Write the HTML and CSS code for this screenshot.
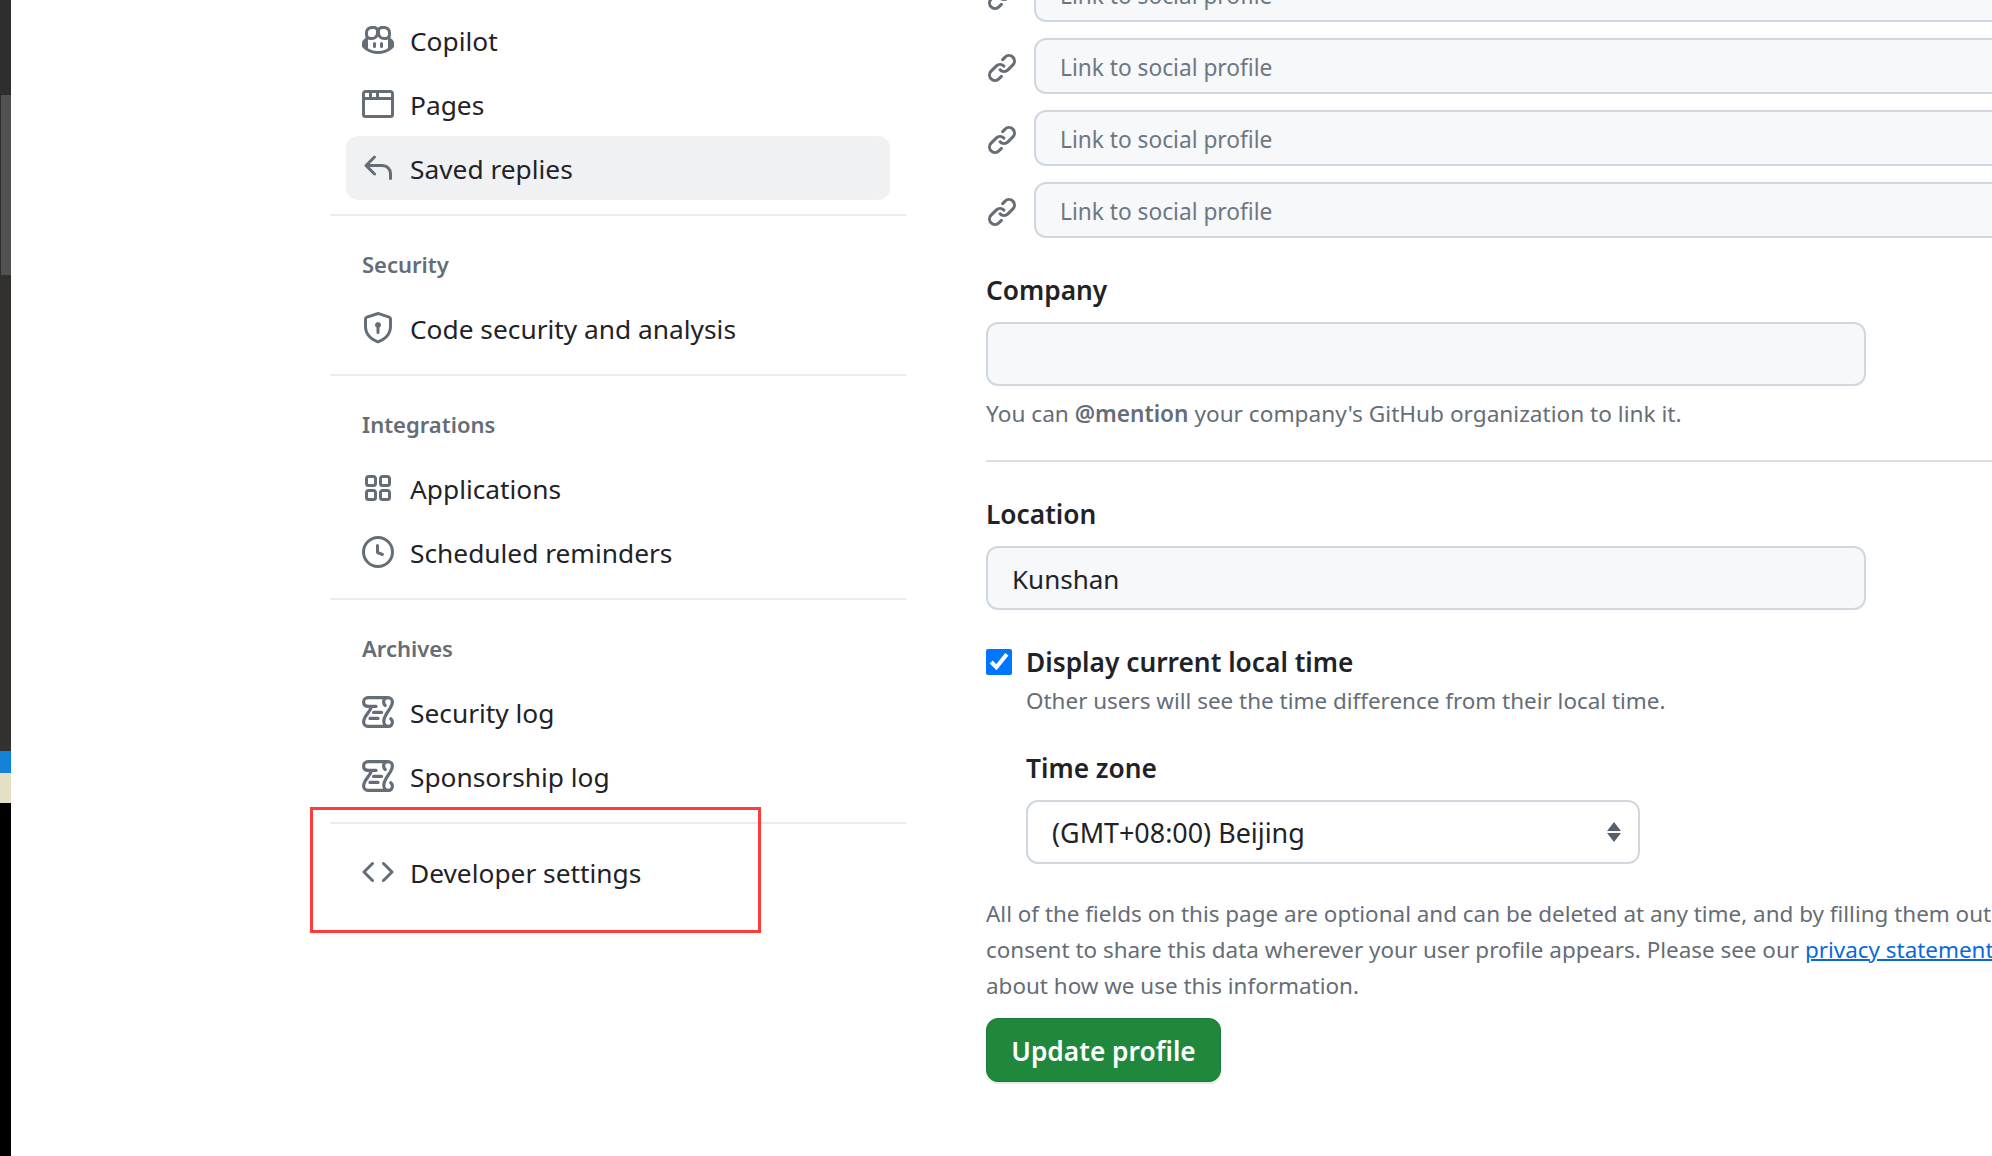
FILE: index.html
```html
<!DOCTYPE html>
<html lang="en">
<head>
    <meta charset="UTF-8">
    <meta name="viewport" content="width=device-width, initial-scale=1.0">
    <title>Public profile</title>
    <link rel="stylesheet" href="styles.css">
</head>

<body>
    <div class="strip">
        <div class="strip-top"></div>
        <div class="strip-thumb"></div>
        <div class="strip-dark"></div>
        <div class="strip-blue"></div>
        <div class="strip-cream"></div>
        <div class="strip-black"></div>
    </div>

    <nav class="sidebar">
        <a class="nav-item">
            <svg class="icon" viewBox="0 0 16 16"><path d="M7.998 15.035c-4.562 0-7.873-2.914-7.998-3.749V9.338c.085-.628.677-1.686 1.588-2.065.013-.07.024-.143.036-.218.029-.183.06-.384.126-.612-.201-.508-.254-1.084-.254-1.656 0-.87.128-1.769.693-2.484.579-.733 1.494-1.124 2.724-1.261 1.206-.134 2.262.034 2.944.765.05.053.096.108.139.165.044-.057.094-.112.143-.165.682-.731 1.738-.899 2.944-.765 1.23.137 2.145.528 2.724 1.261.566.715.693 1.614.693 2.484 0 .572-.053 1.148-.254 1.656.066.228.098.429.126.612.012.076.024.148.037.218.924.385 1.522 1.471 1.591 2.095v1.872c0 .766-3.351 3.795-8.002 3.795Zm0-1.485c2.28 0 4.584-1.11 5.002-1.433V7.862l-.023-.116c-.49.21-1.075.291-1.727.291-1.146 0-2.059-.327-2.71-.991A3.222 3.222 0 0 1 8 6.303a3.24 3.24 0 0 1-.544.743c-.65.664-1.563.991-2.71.991-.652 0-1.236-.081-1.727-.291l-.023.116v4.255c.419.323 2.722 1.433 5.002 1.433ZM6.762 2.83c-.193-.206-.637-.413-1.682-.297-1.019.113-1.479.404-1.713.7-.247.312-.369.789-.369 1.554 0 .793.129 1.171.308 1.371.162.181.519.379 1.442.379.853 0 1.339-.235 1.638-.54.315-.322.527-.827.617-1.553.117-.935-.037-1.395-.241-1.614Zm4.155-.297c-1.044-.116-1.488.091-1.681.297-.204.219-.359.679-.242 1.614.091.726.303 1.231.618 1.553.299.305.784.54 1.638.54.922 0 1.28-.198 1.442-.379.179-.2.308-.578.308-1.371 0-.765-.123-1.242-.37-1.554-.233-.296-.693-.587-1.713-.7Z"/><path d="M6.25 9.037a.75.75 0 0 1 .75.75v1.501a.75.75 0 0 1-1.5 0V9.787a.75.75 0 0 1 .75-.75Zm4.25.75v1.501a.75.75 0 0 1-1.5 0V9.787a.75.75 0 0 1 1.5 0Z"/></svg>
            Copilot
        </a>
        <a class="nav-item">
            <svg class="icon" viewBox="0 0 16 16"><path d="M0 2.75C0 1.784.784 1 1.75 1h12.5c.966 0 1.75.784 1.75 1.75v10.5A1.75 1.75 0 0 1 14.25 15H1.75A1.75 1.75 0 0 1 0 13.25ZM14.5 6h-13v7.25c0 .138.112.25.25.25h12.5a.25.25 0 0 0 .25-.25Zm-6-3.5v2h6v-1.75a.25.25 0 0 0-.25-.25ZM5 2.5v2h2v-2Zm-3.25 0a.25.25 0 0 0-.25.25V4.5h2v-2Z"/></svg>
            Pages
        </a>
        <a class="nav-item active">
            <svg class="icon" viewBox="0 0 16 16"><path d="M6.78 1.97a.75.75 0 0 1 0 1.06L3.81 6h6.44A4.75 4.75 0 0 1 15 10.75v2.5a.75.75 0 0 1-1.5 0v-2.5a3.25 3.25 0 0 0-3.25-3.25H3.81l2.97 2.97a.749.749 0 0 1-.326 1.275.749.749 0 0 1-.734-.215L1.47 7.28a.75.75 0 0 1 0-1.06l4.25-4.25a.75.75 0 0 1 1.06 0Z"/></svg>
            Saved replies
        </a>
        <hr class="nav-divider">

        <h3 class="nav-heading">Security</h3>
        <a class="nav-item">
            <svg class="icon" viewBox="0 0 16 16"><path d="m8.533.133 5.25 1.68A1.75 1.75 0 0 1 15 3.48V7c0 1.566-.32 3.182-1.303 4.682-.983 1.498-2.585 2.813-5.032 3.855a1.697 1.697 0 0 1-1.33 0c-2.447-1.042-4.049-2.357-5.032-3.855C1.32 10.182 1 8.566 1 7V3.48a1.75 1.75 0 0 1 1.217-1.667l5.25-1.68a1.748 1.748 0 0 1 1.066 0Zm-.61 1.429.001.001-5.25 1.68a.251.251 0 0 0-.174.237V7c0 1.36.275 2.666 1.057 3.859.784 1.194 2.121 2.342 4.366 3.298a.196.196 0 0 0 .154 0c2.245-.957 3.582-2.103 4.366-3.297C13.225 9.666 13.5 8.358 13.5 7V3.48a.25.25 0 0 0-.174-.238l-5.25-1.68a.25.25 0 0 0-.153 0ZM9.5 6.5c0 .536-.286 1.032-.75 1.3v2.45a.75.75 0 0 1-1.5 0V7.8A1.5 1.5 0 1 1 9.5 6.5Z"/></svg>
            Code security and analysis
        </a>
        <hr class="nav-divider">

        <h3 class="nav-heading">Integrations</h3>
        <a class="nav-item">
            <svg class="icon" viewBox="0 0 16 16"><path d="M1.5 3.25c0-.966.784-1.75 1.75-1.75h2.5c.966 0 1.75.784 1.75 1.75v2.5A1.75 1.75 0 0 1 5.75 7.5h-2.5A1.75 1.75 0 0 1 1.5 5.75Zm7 0c0-.966.784-1.75 1.75-1.75h2.5c.966 0 1.75.784 1.75 1.75v2.5a1.75 1.75 0 0 1-1.75 1.75h-2.5A1.75 1.75 0 0 1 8.5 5.75Zm-7 7c0-.966.784-1.75 1.75-1.75h2.5c.966 0 1.75.784 1.75 1.75v2.5a1.75 1.75 0 0 1-1.75 1.75h-2.5a1.75 1.75 0 0 1-1.75-1.75Zm7 0c0-.966.784-1.75 1.75-1.75h2.5c.966 0 1.75.784 1.75 1.75v2.5a1.75 1.75 0 0 1-1.75 1.75h-2.5a1.75 1.75 0 0 1-1.75-1.75ZM3.25 3a.25.25 0 0 0-.25.25v2.5c0 .138.112.25.25.25h2.5A.25.25 0 0 0 6 5.75v-2.5A.25.25 0 0 0 5.75 3Zm7 0a.25.25 0 0 0-.25.25v2.5c0 .138.112.25.25.25h2.5a.25.25 0 0 0 .25-.25v-2.5a.25.25 0 0 0-.25-.25Zm-7 7a.25.25 0 0 0-.25.25v2.5c0 .138.112.25.25.25h2.5a.25.25 0 0 0 .25-.25v-2.5a.25.25 0 0 0-.25-.25Zm7 0a.25.25 0 0 0-.25.25v2.5c0 .138.112.25.25.25h2.5a.25.25 0 0 0 .25-.25v-2.5a.25.25 0 0 0-.25-.25Z"/></svg>
            Applications
        </a>
        <a class="nav-item">
            <svg class="icon" viewBox="0 0 16 16"><path d="M8 0a8 8 0 1 1 0 16A8 8 0 0 1 8 0ZM1.5 8a6.5 6.5 0 1 0 13 0 6.5 6.5 0 0 0-13 0Zm7-3.25v2.992l2.028.812a.75.75 0 0 1-.557 1.392l-2.5-1A.751.751 0 0 1 7 8.25v-3.5a.75.75 0 0 1 1.5 0Z"/></svg>
            Scheduled reminders
        </a>
        <hr class="nav-divider">

        <h3 class="nav-heading">Archives</h3>
        <a class="nav-item">
            <svg class="icon icon-line" viewBox="0 0 16 16"><path d="M3 .8h10A2.2 2.2 0 0 1 15.2 3c0 3.2-4.3 6-4.3 9.6 0 1.5 1 2.6 2.3 2.6s2-1 2-2.2c0-.7-.3-1.2-.8-1.6M13.2 15.2H3A2.2 2.2 0 0 1 .8 13c0-3 3.3-5 4-7.8M3 .8A2.2 2.2 0 0 0 .8 3c0 1.4 1 2.2 2.4 2.2H7M13 .8a2.2 2.2 0 0 0-2.2 2.2c0 .7.3 1.3.8 1.7M5.8 8.2h4M4 11.2h4"/></svg>
            Security log
        </a>
        <a class="nav-item">
            <svg class="icon icon-line" viewBox="0 0 16 16"><path d="M3 .8h10A2.2 2.2 0 0 1 15.2 3c0 3.2-4.3 6-4.3 9.6 0 1.5 1 2.6 2.3 2.6s2-1 2-2.2c0-.7-.3-1.2-.8-1.6M13.2 15.2H3A2.2 2.2 0 0 1 .8 13c0-3 3.3-5 4-7.8M3 .8A2.2 2.2 0 0 0 .8 3c0 1.4 1 2.2 2.4 2.2H7M13 .8a2.2 2.2 0 0 0-2.2 2.2c0 .7.3 1.3.8 1.7M5.8 8.2h4M4 11.2h4"/></svg>
            Sponsorship log
        </a>
        <hr class="nav-divider nav-divider-last">
        <a class="nav-item">
            <svg class="icon" viewBox="0 0 16 16"><path d="m11.28 3.22 4.25 4.25a.75.75 0 0 1 0 1.06l-4.25 4.25a.749.749 0 0 1-1.275-.326.749.749 0 0 1 .215-.734L13.94 8l-3.72-3.72a.749.749 0 0 1 .326-1.275.749.749 0 0 1 .734.215Zm-6.56 0a.751.751 0 0 1 1.042.018.751.751 0 0 1 .018 1.042L2.06 8l3.72 3.72a.749.749 0 0 1-.326 1.275.749.749 0 0 1-.734-.215L.47 8.53a.75.75 0 0 1 0-1.06Z"/></svg>
            Developer settings
        </a>
        <div class="highlight-box"></div>
    </nav>

    <main class="content">
        <div class="social-row">
            <svg class="icon" viewBox="0 0 16 16"><path d="m7.775 3.275 1.25-1.25a3.5 3.5 0 1 1 4.95 4.95l-2.5 2.5a3.5 3.5 0 0 1-4.95 0 .751.751 0 0 1 .018-1.042.751.751 0 0 1 1.042-.018 1.998 1.998 0 0 0 2.83 0l2.5-2.5a2.002 2.002 0 0 0-2.83-2.83l-1.25 1.25a.751.751 0 0 1-1.042-.018.751.751 0 0 1-.018-1.042Zm-4.69 9.64a1.998 1.998 0 0 0 2.83 0l1.25-1.25a.751.751 0 0 1 1.042.018.751.751 0 0 1 .018 1.042l-1.25 1.25a3.5 3.5 0 1 1-4.95-4.95l2.5-2.5a3.5 3.5 0 0 1 4.95 0 .751.751 0 0 1-.018 1.042.751.751 0 0 1-1.042.018 1.998 1.998 0 0 0-2.83 0l-2.5 2.5a1.998 1.998 0 0 0 0 2.83Z"/></svg>
            <input class="social-input" type="text" placeholder="Link to social profile">
        </div>
        <div class="social-row">
            <svg class="icon" viewBox="0 0 16 16"><path d="m7.775 3.275 1.25-1.25a3.5 3.5 0 1 1 4.95 4.95l-2.5 2.5a3.5 3.5 0 0 1-4.95 0 .751.751 0 0 1 .018-1.042.751.751 0 0 1 1.042-.018 1.998 1.998 0 0 0 2.83 0l2.5-2.5a2.002 2.002 0 0 0-2.83-2.83l-1.25 1.25a.751.751 0 0 1-1.042-.018.751.751 0 0 1-.018-1.042Zm-4.69 9.64a1.998 1.998 0 0 0 2.83 0l1.25-1.25a.751.751 0 0 1 1.042.018.751.751 0 0 1 .018 1.042l-1.25 1.25a3.5 3.5 0 1 1-4.95-4.95l2.5-2.5a3.5 3.5 0 0 1 4.95 0 .751.751 0 0 1-.018 1.042.751.751 0 0 1-1.042.018 1.998 1.998 0 0 0-2.83 0l-2.5 2.5a1.998 1.998 0 0 0 0 2.83Z"/></svg>
            <input class="social-input" type="text" placeholder="Link to social profile">
        </div>
        <div class="social-row">
            <svg class="icon" viewBox="0 0 16 16"><path d="m7.775 3.275 1.25-1.25a3.5 3.5 0 1 1 4.95 4.95l-2.5 2.5a3.5 3.5 0 0 1-4.95 0 .751.751 0 0 1 .018-1.042.751.751 0 0 1 1.042-.018 1.998 1.998 0 0 0 2.83 0l2.5-2.5a2.002 2.002 0 0 0-2.83-2.83l-1.25 1.25a.751.751 0 0 1-1.042-.018.751.751 0 0 1-.018-1.042Zm-4.69 9.64a1.998 1.998 0 0 0 2.83 0l1.25-1.25a.751.751 0 0 1 1.042.018.751.751 0 0 1 .018 1.042l-1.25 1.25a3.5 3.5 0 1 1-4.95-4.95l2.5-2.5a3.5 3.5 0 0 1 4.95 0 .751.751 0 0 1-.018 1.042.751.751 0 0 1-1.042.018 1.998 1.998 0 0 0-2.83 0l-2.5 2.5a1.998 1.998 0 0 0 0 2.83Z"/></svg>
            <input class="social-input" type="text" placeholder="Link to social profile">
        </div>
        <div class="social-row">
            <svg class="icon" viewBox="0 0 16 16"><path d="m7.775 3.275 1.25-1.25a3.5 3.5 0 1 1 4.95 4.95l-2.5 2.5a3.5 3.5 0 0 1-4.95 0 .751.751 0 0 1 .018-1.042.751.751 0 0 1 1.042-.018 1.998 1.998 0 0 0 2.83 0l2.5-2.5a2.002 2.002 0 0 0-2.83-2.83l-1.25 1.25a.751.751 0 0 1-1.042-.018.751.751 0 0 1-.018-1.042Zm-4.69 9.64a1.998 1.998 0 0 0 2.83 0l1.25-1.25a.751.751 0 0 1 1.042.018.751.751 0 0 1 .018 1.042l-1.25 1.25a3.5 3.5 0 1 1-4.95-4.95l2.5-2.5a3.5 3.5 0 0 1 4.95 0 .751.751 0 0 1-.018 1.042.751.751 0 0 1-1.042.018 1.998 1.998 0 0 0-2.83 0l-2.5 2.5a1.998 1.998 0 0 0 0 2.83Z"/></svg>
            <input class="social-input" type="text" placeholder="Link to social profile">
        </div>

        <label class="field-label company-label" for="company">Company</label>
        <input class="text-input" type="text" id="company">
        <p class="note company-note">You can <strong>@mention</strong> your company's GitHub organization to link it.</p>
        <hr class="form-divider">

        <label class="field-label location-label" for="location">Location</label>
        <input class="text-input" type="text" id="location" value="Kunshan">

        <div class="check-row">
            <input class="check" type="checkbox" id="localtime" checked>
            <label class="field-label" for="localtime">Display current local time</label>
        </div>
        <div class="timezone">
            <p class="note">Other users will see the time difference from their local time.</p>
            <label class="field-label timezone-label" for="timezone">Time zone</label>
            <select class="select" id="timezone">
                <option>(GMT+08:00) Beijing</option>
            </select>
        </div>

        <p class="note disclaimer">All of the fields on this page are optional and can be deleted at any time, and by filling them out, you're giving us<br>
        consent to share this data wherever your user profile appears. Please see our <a class="link" href="#">privacy statement</a> to learn more<br>
        about how we use this information.</p>

        <button class="btn-primary" type="button">Update profile</button>
    </main>
</body>

</html>
```

FILE: styles.css
```css
* {
    box-sizing: border-box;
}

html,
body {
    height: 100%;
}

body {
    font-family: "Noto Sans", "Open Sans", sans-serif;
    background-color: #fff;
    color: #1f2328;
    display: flex;
    margin: 0;
    overflow: hidden;
    font-size: 26.3px;
}

/* edge of the window behind the browser */
.strip {
    width: 11px;
    flex: none;
    display: flex;
    flex-direction: column;
}

.strip-top {
    height: 95px;
    background: #2e2e2e;
}

.strip-thumb {
    height: 180px;
    background: #505250;
    border-left: 1px solid #2e2e2e;
}

.strip-dark {
    height: 476px;
    background: #32312e;
}

.strip-blue {
    height: 22px;
    background: #1482d8;
}

.strip-cream {
    height: 30px;
    background: #e4e0c4;
}

.strip-black {
    flex: 1;
    background: #000;
}

.sidebar {
    position: relative;
    flex: none;
    width: 576px;
    margin-left: 319px;
    padding-top: 8px;
}

.nav-item {
    display: flex;
    align-items: center;
    gap: 16px;
    height: 64px;
    margin: 0 16px;
    padding: 2px 16px 0;
    border-radius: 12px;
}

.nav-item .icon {
    margin-bottom: 2px;
}

.nav-item.active {
    background: #f0f1f3;
}

.icon {
    width: 32px;
    height: 32px;
    flex: none;
    fill: #656d76;
}

.icon-line {
    fill: none;
    stroke: #656d76;
    stroke-width: 1.6;
    stroke-linecap: round;
    stroke-linejoin: round;
}

.nav-divider {
    height: 2px;
    margin: 14px 0 0;
    border: none;
    background: #e8ebef;
}

.nav-divider-last {
    margin-bottom: 16px;
}

.nav-heading {
    margin: 0;
    padding: 32px 32px 16px;
    font-size: 22px;
    line-height: 32px;
    font-weight: 600;
    color: #656d76;
}

.highlight-box {
    position: absolute;
    left: -20px;
    top: 807px;
    width: 451px;
    height: 126px;
    border: 3px solid #ff3b3b;
}

.content {
    flex: none;
    width: 1400px;
    margin: -34px 0 0 80px;
}

.social-row {
    display: flex;
    align-items: center;
    gap: 16px;
    margin-bottom: 16px;
}

.social-row .icon {
    margin-top: 4px;
}

.social-input {
    flex: 1;
    height: 56px;
    padding: 2px 24px 0;
    border: 2px solid #d0d7de;
    border-radius: 12px;
    background: #f6f8fa;
    font: inherit;
    font-size: 22.7px;
}

.social-input::placeholder {
    color: #6e7781;
    opacity: 1;
}

.field-label {
    display: block;
    font-weight: 600;
    line-height: 40px;
}

.company-label {
    margin-top: 32px;
    margin-bottom: 12px;
}

.text-input {
    display: block;
    width: 880px;
    height: 64px;
    padding: 1px 24px 0;
    border: 2px solid #d0d7de;
    border-radius: 12px;
    background: #f6f8fa;
    color: #1f2328;
    font: inherit;
    font-size: 26px;
}

.note {
    margin: 0;
    font-size: 22.45px;
    line-height: 36px;
    color: #656d76;
}

.note strong {
    font-weight: 600;
}

.company-note {
    margin-top: 10px;
    font-size: 22.65px;
}

.form-divider {
    width: 1100px;
    height: 2px;
    margin: 28px 0 0;
    border: none;
    background: #d8dee4;
}

.location-label {
    margin-top: 32px;
    margin-bottom: 12px;
}

.check-row {
    display: flex;
    align-items: center;
    gap: 14px;
    margin-top: 32px;
}

.check {
    width: 26px;
    height: 26px;
    margin: 0;
}

.timezone {
    padding-left: 40px;
    margin-top: 1px;
}

.timezone-label {
    margin-top: 29px;
    margin-bottom: 12px;
}

.select {
    display: block;
    width: 614px;
    height: 64px;
    padding: 1px 24px 0;
    border: 2px solid #d0d7de;
    border-radius: 12px;
    background: #fff url("data:image/svg+xml,%3Csvg xmlns='http://www.w3.org/2000/svg' width='14' height='20'%3E%3Cpath fill='%2357606a' d='M7 0l7 9H0zM7 20l7-9H0z'/%3E%3C/svg%3E") no-repeat right 17px center;
    color: #1f2328;
    font: inherit;
    font-size: 26.9px;
    appearance: none;
}

.disclaimer {
    margin-top: 32px;
}

.link {
    color: #0969da;
    text-decoration-thickness: 2px;
}

.btn-primary {
    display: block;
    width: 235px;
    height: 64px;
    margin-top: 14px;
    padding: 2px 0 0;
    border: 1px solid #1c7a37;
    border-radius: 12px;
    background: #1f883d;
    box-shadow: 0 2px 0 rgba(31, 35, 40, 0.1);
    color: #fff;
    font: inherit;
    font-weight: 600;
}
```
